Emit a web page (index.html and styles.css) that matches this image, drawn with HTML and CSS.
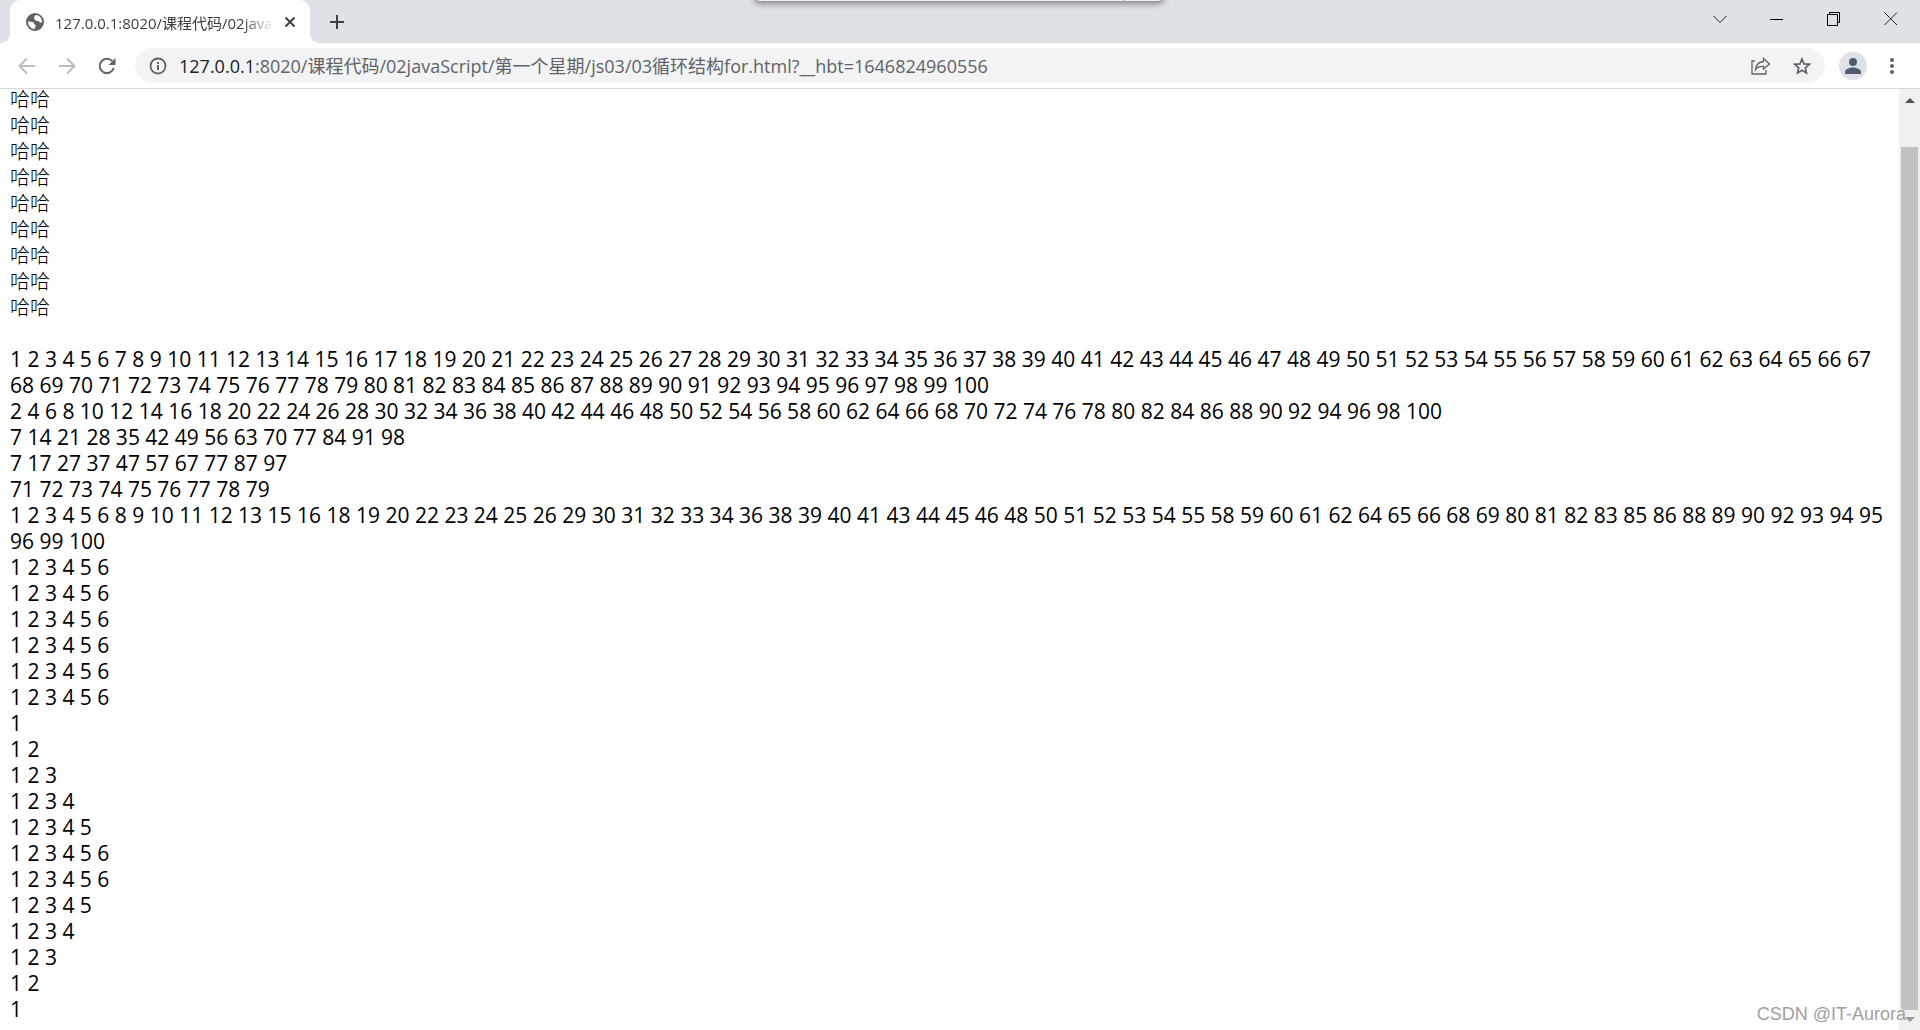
FILE: index.html
```html
<!DOCTYPE html>
<html lang="zh-CN">
<head>
    <meta charset="UTF-8">
    <meta name="viewport" content="width=device-width, initial-scale=1.0">
    <title>127.0.0.1:8020/课程代码/02javaScript</title>
    <link rel="stylesheet" href="styles.css">
</head>
<body>

    <div class="dock"><span></span></div>

    <header class="tab-strip">
        <div class="tab">
            <svg class="globe" viewBox="0 0 18 18" width="18" height="18">
                <circle cx="9" cy="9" r="9" fill="#5f6368"/>
                <path d="M2 8.500c2 .2 4.500 0 5.500 1s.2 2 1.800 2.200c1 .3.600 1.800-.3 2.300v2C5 16 2 13 2 8.500z" fill="#fff"/>
                <path d="M8 3.800c1-.2 1-1.600 2.200-1.800C14 2.600 16 5.500 16 9c-.8 1-2 .8-2.600 0-.9-1.300-2.700-.6-3.900-1.400-1.200-.9-.4-1.700-1.500-2z" fill="#fff"/>
            </svg>
            <span class="tab-title">127.0.0.1:8020/课程代码/02java</span>
            <button class="tab-close" aria-label="关闭标签页">
                <svg viewBox="0 0 12 12" width="12" height="12"><path d="M1.500 1.500l9 9M10.500 1.500l-9 9" stroke="#3c4043" stroke-width="2" fill="none"/></svg>
            </button>
        </div>
        <button class="new-tab" aria-label="新标签页">
            <svg viewBox="0 0 16 16" width="16" height="16"><path d="M8 1v14M1 8h14" stroke="#3c4043" stroke-width="2" fill="none"/></svg>
        </button>
        <div class="window-buttons">
            <button aria-label="搜索标签页"><svg viewBox="0 0 14 14" width="14" height="14"><path d="M.5 4l6.500 6.500L13.500 4" stroke="#222" fill="none"/></svg></button>
            <button aria-label="最小化"><svg viewBox="0 0 14 14" width="14" height="14"><path d="M0 7.500h13" stroke="#000" fill="none"/></svg></button>
            <button aria-label="还原"><svg viewBox="0 0 14 14" width="14" height="14"><path d="M.5 2.500h10v11H.5zM2.500 2.500v-2h10v10h-2" stroke="#000" fill="none"/></svg></button>
            <button aria-label="关闭"><svg viewBox="0 0 14 14" width="14" height="14"><path d="M.5.500l12.500 12.500M13 .5L.5 13" stroke="#222" fill="none"/></svg></button>
        </div>
    </header>

    <nav class="toolbar">
        <div class="nav-buttons">
            <button aria-label="后退" disabled>
                <svg viewBox="0 0 18 18" width="18" height="18"><path d="M17 9H2M9 1.500L1.500 9 9 16.500" stroke="#babcbe" stroke-width="2" fill="none"/></svg>
            </button>
            <button aria-label="前进" disabled>
                <svg viewBox="0 0 18 18" width="18" height="18"><path d="M1 9h15M9 1.500L16.500 9 9 16.500" stroke="#babcbe" stroke-width="2" fill="none"/></svg>
            </button>
            <button aria-label="重新加载">
                <svg viewBox="0 0 18 18" width="18" height="18"><path d="M15.800 11A7.200 7.200 0 1 1 14.200 4" stroke="#5f6368" stroke-width="2" fill="none"/><path d="M17.500 1v7h-7z" fill="#5f6368"/></svg>
            </button>
        </div>
        <div class="address">
            <button aria-label="查看网站信息">
                <svg viewBox="0 0 18 18" width="18" height="18"><circle cx="9" cy="9" r="7.500" stroke="#5f6368" stroke-width="1.800" fill="none"/><path d="M9 8v5M9 5v2" stroke="#5f6368" stroke-width="2"/></svg>
            </button>
            <a class="url" href="#"><span class="host">127.0.0.1</span>:8020/课程代码/02javaScript/第一个星期/js03/03循环结构for.html?__hbt=1646824960556</a>
            <button aria-label="分享此页面">
                <svg viewBox="0 0 20 18" width="20" height="18"><path d="M4 4H1v13h14v-4" stroke="#5f6368" stroke-width="1.300" fill="none"/><path d="M12.500 1.500L18.500 7l-6 5V9.500C9 9.300 6.500 10 4.500 12.500 5 8 7.500 5 12.500 4.500z" stroke="#5f6368" stroke-width="1.300" fill="none"/></svg>
            </button>
            <button aria-label="为此标签页添加书签">
                <svg viewBox="0 0 18 18" width="18" height="18"><path d="M9 2l2 4.900 5.300.4-4 3.500 1.200 5.200L9 13.200 4.500 16l1.200-5.200-4-3.500L7 6.900z" stroke="#5f6368" stroke-width="1.700" fill="none"/></svg>
            </button>
        </div>
        <button class="avatar" aria-label="用户">
            <svg viewBox="0 0 28 28" width="28" height="28"><circle cx="14" cy="14" r="14" fill="#dee1e6"/><circle cx="14" cy="10" r="4" fill="#4f5b6e"/><path d="M6 22v-2c0-3 5-4.500 8-4.500s8 1.500 8 4.500v2z" fill="#4f5b6e"/></svg>
        </button>
        <button class="menu" aria-label="菜单">
            <svg viewBox="0 0 4 18" width="4" height="18"><g fill="#5f6368"><circle cx="2" cy="3" r="2"/><circle cx="2" cy="9" r="2"/><circle cx="2" cy="15" r="2"/></g></svg>
        </button>
    </nav>

    <div class="viewport">
        <main class="page">
            <div class="haha">
                哈哈<br>
                哈哈<br>
                哈哈<br>
                哈哈<br>
                哈哈<br>
                哈哈<br>
                哈哈<br>
                哈哈<br>
                哈哈<br>
                <br>
            </div>
            1 2 3 4 5 6 7 8 9 10 11 12 13 14 15 16 17 18 19 20 21 22 23 24 25 26 27 28 29 30 31 32 33 34 35 36 37 38 39 40 41 42 43 44 45 46 47 48 49 50 51 52 53 54 55 56 57 58 59 60 61 62 63 64 65 66 67 68 69 70 71 72 73 74 75 76 77 78 79 80 81 82 83 84 85 86 87 88 89 90 91 92 93 94 95 96 97 98 99 100<br>
            2 4 6 8 10 12 14 16 18 20 22 24 26 28 30 32 34 36 38 40 42 44 46 48 50 52 54 56 58 60 62 64 66 68 70 72 74 76 78 80 82 84 86 88 90 92 94 96 98 100<br>
            7 14 21 28 35 42 49 56 63 70 77 84 91 98<br>
            7 17 27 37 47 57 67 77 87 97<br>
            71 72 73 74 75 76 77 78 79<br>
            1 2 3 4 5 6 8 9 10 11 12 13 15 16 18 19 20 22 23 24 25 26 29 30 31 32 33 34 36 38 39 40 41 43 44 45 46 48 50 51 52 53 54 55 58 59 60 61 62 64 65 66 68 69 80 81 82 83 85 86 88 89 90 92 93 94 95 96 99 100<br>
            1 2 3 4 5 6<br>
            1 2 3 4 5 6<br>
            1 2 3 4 5 6<br>
            1 2 3 4 5 6<br>
            1 2 3 4 5 6<br>
            1 2 3 4 5 6<br>
            1<br>
            1 2<br>
            1 2 3<br>
            1 2 3 4<br>
            1 2 3 4 5<br>
            1 2 3 4 5 6<br>
            1 2 3 4 5 6<br>
            1 2 3 4 5<br>
            1 2 3 4<br>
            1 2 3<br>
            1 2<br>
            1
        </main>
        <div class="scrollbar">
            <svg viewBox="0 0 10 5" width="10" height="5"><path d="M0 5l5-5 5 5z" fill="#505050"/></svg>
            <div class="thumb"></div>
            <svg viewBox="0 0 10 5" width="10" height="5"><path d="M0 0l5 5 5-5z" fill="#999"/></svg>
        </div>
    </div>

    <div class="watermark">CSDN @IT-Aurora</div>

</body>
</html>
```
FILE: styles.css
```css
* {
    margin: 0;
    padding: 0;
    box-sizing: border-box;
}

body {
    height: 100vh;
    display: flex;
    flex-direction: column;
    overflow: hidden;
    background-color: #ffffff;
    font-family: "Open Sans", "Noto Sans CJK SC", sans-serif;
}

button {
    display: flex;
    align-items: center;
    justify-content: center;
    flex-shrink: 0;
    border: none;
    background: none;
}

svg {
    display: block;
    flex-shrink: 0;
}

/* panel hidden above the top edge of the screen */
.dock {
    position: absolute;
    top: -10px;
    left: 50%;
    width: 410px;
    height: 12px;
    margin-left: -206px;
    border: 1px solid #999999;
    border-radius: 8px;
    background-color: #f0f0f0;
    box-shadow: 0 2px 6px rgba(0, 0, 0, 0.4);
}

.dock span {
    display: block;
    height: 100%;
    margin-right: 38px;
    border-right: 1px solid #999999;
}

.tab-strip {
    display: flex;
    height: 43px;
    background-color: #dee1e6;
}

.tab {
    display: flex;
    align-items: center;
    position: relative;
    width: 300px;
    margin-left: 10px;
    padding: 0 14px 0 16px;
    border-radius: 10px 10px 0 0;
    background-color: #ffffff;
}

/* curved feet of the active tab */
.tab::before,
.tab::after {
    content: "";
    position: absolute;
    bottom: 0;
    width: 10px;
    height: 10px;
}

.tab::before {
    left: -10px;
    background: radial-gradient(circle at 0 0, #dee1e6 10px, #ffffff 10px);
}

.tab::after {
    right: -10px;
    background: radial-gradient(circle at 100% 0, #dee1e6 10px, #ffffff 10px);
}

.tab-title {
    flex: 1;
    margin: 2px 10px 0 11px;
    overflow: hidden;
    white-space: nowrap;
    font-size: 15px;
    line-height: 20px;
    color: #3c4043;
    -webkit-mask-image: linear-gradient(to right, #000 86%, transparent);
    mask-image: linear-gradient(to right, #000 86%, transparent);
}

.tab-close {
    width: 12px;
    height: 20px;
}

.new-tab {
    width: 34px;
    margin-left: 10px;
}

.window-buttons {
    display: flex;
    height: 37px;
    margin-left: auto;
    margin-right: 1px;
}

.window-buttons button {
    width: 57px;
}

.toolbar {
    display: flex;
    align-items: center;
    height: 46px;
    padding: 0 26px 0 18px;
    border-bottom: 1px solid #d5d7d9;
}

.nav-buttons {
    display: flex;
    gap: 22px;
    margin-right: 19px;
}

.nav-buttons button {
    width: 18px;
    height: 36px;
}

.address {
    display: flex;
    align-items: center;
    flex: 1;
    gap: 22px;
    height: 35px;
    margin-right: 14px;
    padding: 0 14px;
    border-radius: 18px;
    background-color: #f1f3f4;
}

.url {
    flex: 1;
    margin-left: -10px;
    overflow: hidden;
    white-space: nowrap;
    font-size: 18px;
    line-height: 26px;
    color: #5f6368;
    text-decoration: none;
}

.host {
    color: #202124;
}

.avatar {
    margin-right: 23px;
}

.viewport {
    display: flex;
    align-items: flex-end;
    flex: 1;
    min-height: 0;
    overflow: hidden;
}

.page {
    flex: 1;
    padding: 8px 8px 8px 10px;
    font-size: 21px;
    line-height: 26px;
    color: #000000;
}

.haha {
    font-family: "Noto Sans CJK SC", sans-serif;
    font-size: 20px;
    font-weight: 300;
}

.scrollbar {
    display: flex;
    flex-direction: column;
    align-items: center;
    width: 21px;
    height: 100%;
    padding: 9px 0 8px;
    background-color: #f0f0f0;
}

.thumb {
    flex: 1;
    width: 17px;
    margin: 44px 0 7px;
    background-color: #c1c1c1;
}

.watermark {
    position: absolute;
    right: 14px;
    bottom: 4px;
    font-family: "Liberation Sans", Arial, sans-serif;
    font-size: 18px;
    line-height: 24px;
    color: #a0a0a0;
    text-shadow: -1px -1px 0 #ffffff;
}
```
